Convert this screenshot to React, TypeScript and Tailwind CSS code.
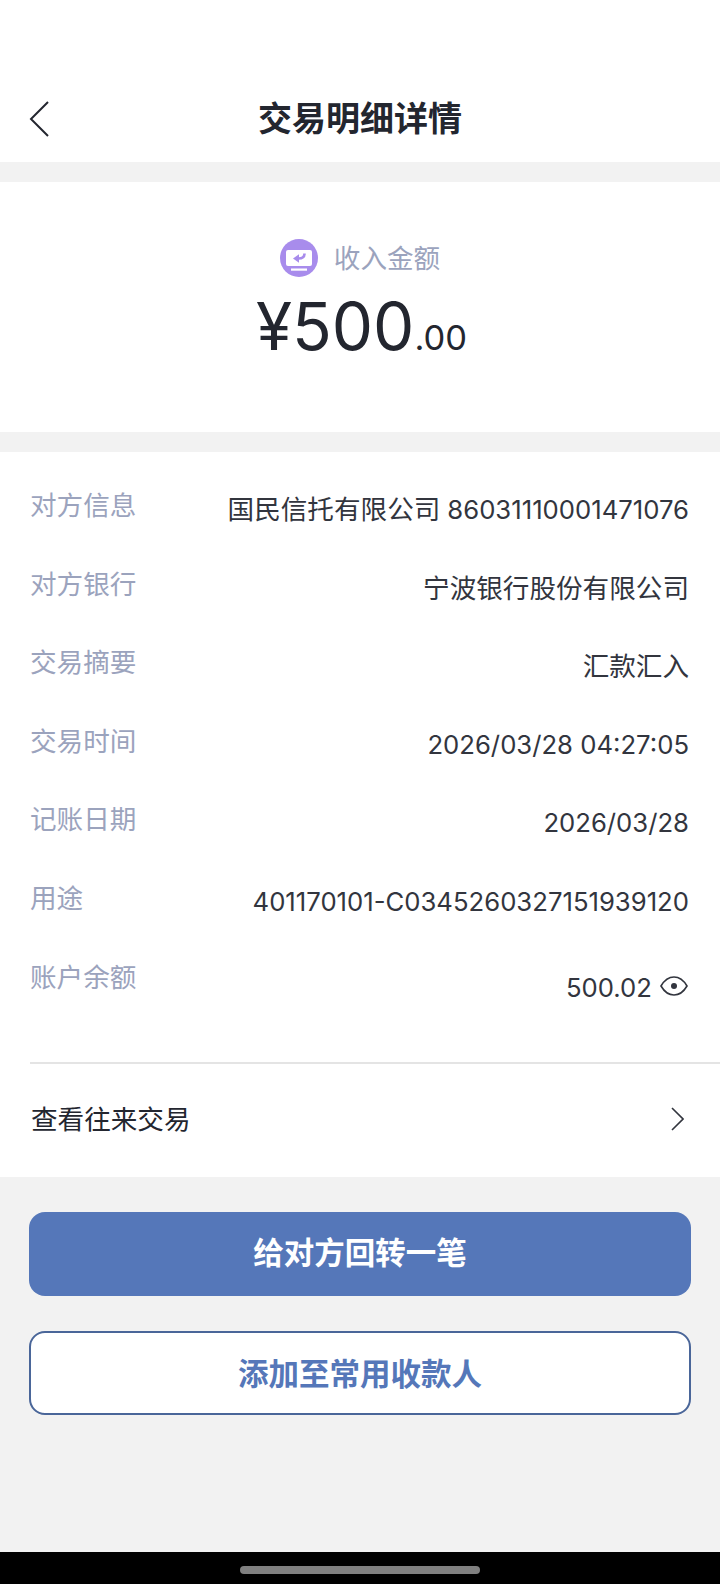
const rows = [
  ['对方信息', '国民信托有限公司', '86031110001471076'],
  ['对方银行', '宁波银行股份有限公司', ''],
  ['交易摘要', '汇款汇入', ''],
  ['交易时间', '', '2026/03/28 04:27:05'],
  ['记账日期', '', '2026/03/28'],
  ['用途', '', '401170101-C0345260327151939120'],
];

function Row({ label, cjk, digits }: { label: string; cjk: string; digits: string }) {
  return (
    <div className="flex h-[78.6px] justify-between pl-[30px] pr-[31px]">
      <span className="text-[26.6px] leading-[36px] text-[#9ba3bd]">{label}</span>
      <span className="mt-[4px] flex items-baseline gap-[7px] leading-[36px] text-[#32353e]">
        {cjk && <span className="text-[26.6px]">{cjk}</span>}
        {digits && <span className="text-[25.7px]">{digits}</span>}
      </span>
    </div>
  );
}

export default function App() {
  return (
    <div className="flex h-[1584px] w-[720px] flex-col bg-[#f2f2f2] font-['Inter','Noto_Sans_CJK_SC',sans-serif]">
      <header className="relative flex h-[162px] shrink-0 items-end justify-center bg-white pb-[19px]">
        <svg className="absolute left-[29px] top-[100px]" width="22" height="38" viewBox="0 0 22 38" fill="none" stroke="#23262f" strokeWidth="2">
          <path d="M19 2 2 19l17 17" />
        </svg>
        <h1 className="text-[34px] font-bold leading-[48px] text-[#23262f]">交易明细详情</h1>
      </header>

      <section className="mt-[20px] flex h-[250px] shrink-0 flex-col items-center bg-white pt-[57px]">
        <div className="flex items-center gap-[16px]">
          <svg width="38" height="38" viewBox="0 0 38 38">
            <circle cx="19" cy="19" r="19" fill="#a88cec" />
            <rect x="6" y="11" width="26" height="16" rx="2" fill="#fff" />
            <rect x="11" y="29.5" width="16" height="2.2" fill="#fff" />
            <path d="M24.5 14.5c0 3.5-2.5 5-6 5" fill="none" stroke="#a88cec" strokeWidth="2.6" />
            <path d="M13 19.5l6-4.2v8.4Z" fill="#a88cec" />
          </svg>
          <span className="text-[26.6px] leading-[38px] text-[#9ba3bd]">收入金额</span>
        </div>
        <div className="ml-[3px] mt-[12px] flex items-baseline text-[#23262f]">
          <span className="text-[65.5px] leading-[76px]">¥500</span>
          <span className="text-[34.5px] leading-[76px]">.00</span>
        </div>
      </section>

      <section className="mt-[20px] flex h-[725px] shrink-0 flex-col bg-white pt-[35px]">
        {rows.map(([label, cjk, digits]) => (
          <Row key={label} label={label} cjk={cjk} digits={digits} />
        ))}
        <div className="flex h-[103.4px] justify-between pl-[30px] pr-[32px]">
          <span className="text-[26.6px] leading-[36px] text-[#9ba3bd]">账户余额</span>
          <div className="mt-[11px] flex h-[36px] items-center gap-[8px]">
            <span className="text-[25.7px] leading-[36px] text-[#32353e]">500.02</span>
            <svg className="mb-[4px]" width="28" height="22" viewBox="0 0 28 22" fill="none" stroke="#32353e" strokeWidth="1.6">
              <path d="M1 11C4.5 5 9 2 14 2s9.5 3 13 9c-3.5 6-8 9-13 9S4.5 17 1 11Z" />
              <circle cx="14" cy="11" r="3" fill="#32353e" stroke="none" />
            </svg>
          </div>
        </div>
        <div className="ml-[30px] h-[2px] bg-[#e4e4e4]" />
        <div className="flex h-[113px] items-center justify-between pb-[2px] pl-[31px] pr-[36px]">
          <span className="text-[26.6px] text-[#23262f]">查看往来交易</span>
          <svg width="13" height="24" viewBox="0 0 13 24" fill="none" stroke="#32353e" strokeWidth="1.6">
            <path d="M1 1l11 11L1 23" />
          </svg>
        </div>
      </section>

      <div className="flex flex-1 flex-col gap-[35px] px-[29px] pt-[35px]">
        <button className="h-[84px] rounded-[16px] bg-[#5577b9] pb-[2px] text-[30.5px] font-bold text-white">给对方回转一笔</button>
        <button className="h-[84px] rounded-[16px] border-2 border-[#4a6699] bg-white pt-[2px] text-[30.5px] font-bold text-[#5577b9]">添加至常用收款人</button>
      </div>

      <div className="flex h-[32px] shrink-0 items-center justify-center bg-black">
        <div className="mt-[4px] h-[8px] w-[240px] rounded-full bg-[#808080]" />
      </div>
    </div>
  );
}
